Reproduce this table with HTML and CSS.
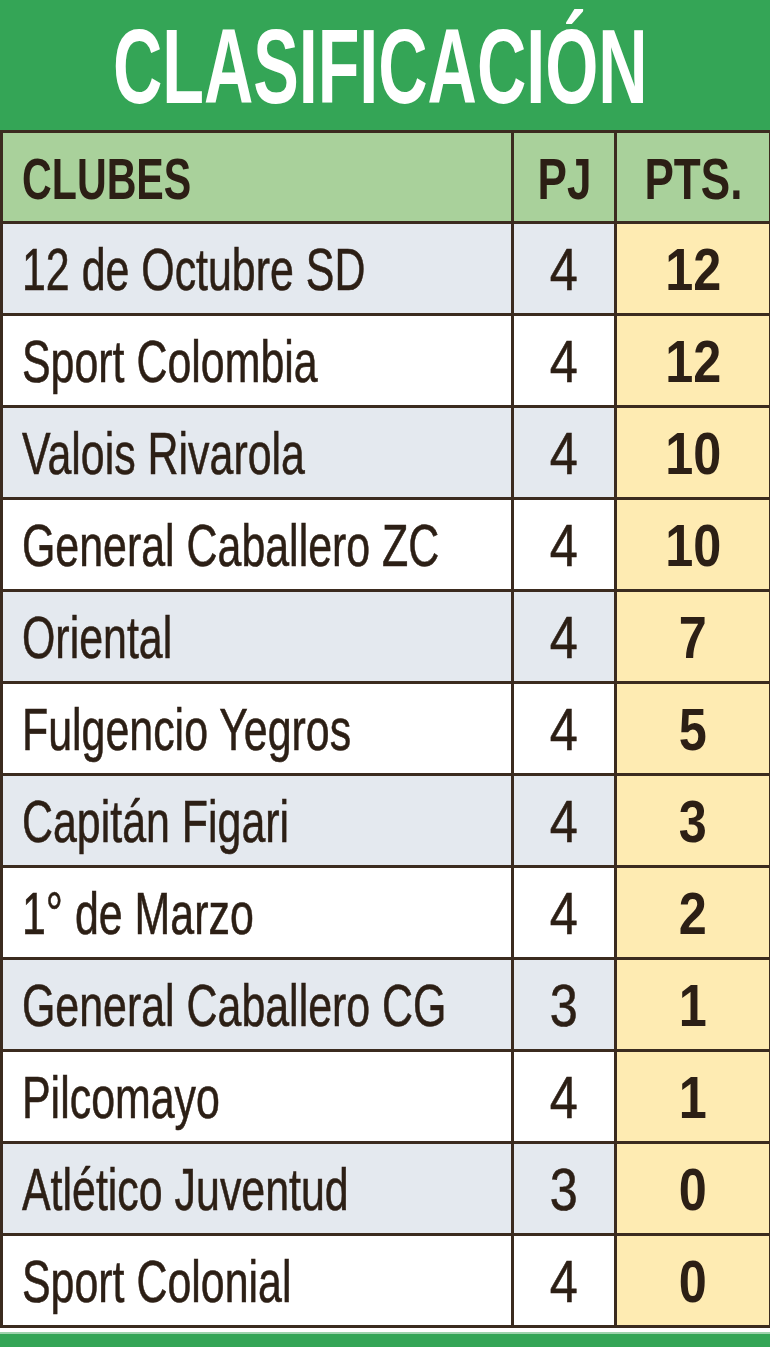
FILE: index.html
```html
<!DOCTYPE html>
<html lang="es">
<head>
<meta charset="utf-8">
<title>Clasificación</title>
<link rel="stylesheet" href="styles.css">
</head>
<body>
<div class="page">
  <header class="title-band"><h1 class="title"><span class="sq-title">CLASIFICACIÓN</span></h1></header>
  <table class="standings">
    <colgroup><col class="c-club"><col class="c-pj"><col class="c-pts"></colgroup>
    <thead>
      <tr>
        <th class="club"><span class="sq-head-l">CLUBES</span></th>
        <th class="num"><span class="sq-head">PJ</span></th>
        <th class="num"><span class="sq-head">PTS.</span></th>
      </tr>
    </thead>
    <tbody>
      <tr class="odd"><td class="club"><span class="sq">12 de Octubre SD</span></td><td class="num"><span class="sqn">4</span></td><td class="pts"><span class="sqn">12</span></td></tr>
      <tr><td class="club"><span class="sq">Sport Colombia</span></td><td class="num"><span class="sqn">4</span></td><td class="pts"><span class="sqn">12</span></td></tr>
      <tr class="odd"><td class="club"><span class="sq">Valois Rivarola</span></td><td class="num"><span class="sqn">4</span></td><td class="pts"><span class="sqn">10</span></td></tr>
      <tr><td class="club"><span class="sq">General Caballero ZC</span></td><td class="num"><span class="sqn">4</span></td><td class="pts"><span class="sqn">10</span></td></tr>
      <tr class="odd"><td class="club"><span class="sq">Oriental</span></td><td class="num"><span class="sqn">4</span></td><td class="pts"><span class="sqn">7</span></td></tr>
      <tr><td class="club"><span class="sq">Fulgencio Yegros</span></td><td class="num"><span class="sqn">4</span></td><td class="pts"><span class="sqn">5</span></td></tr>
      <tr class="odd"><td class="club"><span class="sq">Capitán Figari</span></td><td class="num"><span class="sqn">4</span></td><td class="pts"><span class="sqn">3</span></td></tr>
      <tr><td class="club"><span class="sq">1° de Marzo</span></td><td class="num"><span class="sqn">4</span></td><td class="pts"><span class="sqn">2</span></td></tr>
      <tr class="odd"><td class="club"><span class="sq">General Caballero CG</span></td><td class="num"><span class="sqn">3</span></td><td class="pts"><span class="sqn">1</span></td></tr>
      <tr><td class="club"><span class="sq">Pilcomayo</span></td><td class="num"><span class="sqn">4</span></td><td class="pts"><span class="sqn">1</span></td></tr>
      <tr class="odd"><td class="club"><span class="sq">Atlético Juventud</span></td><td class="num"><span class="sqn">3</span></td><td class="pts"><span class="sqn">0</span></td></tr>
      <tr><td class="club"><span class="sq">Sport Colonial</span></td><td class="num"><span class="sqn">4</span></td><td class="pts"><span class="sqn">0</span></td></tr>
    </tbody>
  </table>
  <div class="bottom-band"></div>
</div>
</body>
</html>
```

FILE: styles.css
```css
html, body {
  margin: 0;
  padding: 0;
  background: #ffffff;
}

.page {
  width: 770px;
  font-family: "Liberation Sans", Arial, sans-serif;
  color: #2c1f15;
}

.title-band {
  height: 130px;
  background: #34a556;
  display: flex;
  align-items: center;
  justify-content: center;
}

.title {
  margin: 0;
  font-size: 105px;
  font-weight: 700;
  line-height: 1;
  color: #ffffff;
  padding-top: 2px;
  padding-right: 10px;
}

.sq-title {
  display: inline-block;
  transform: scaleX(0.65);
  transform-origin: center;
  white-space: nowrap;
}

.standings {
  width: 769px;
  border-collapse: collapse;
  table-layout: fixed;
  border: 3px solid #3b2b1f;
}

.c-club { width: 511px; }
.c-pj { width: 103px; }
.c-pts { width: 155px; }

.standings th,
.standings td {
  border: 3px solid #3b2b1f;
  padding: 0;
  white-space: nowrap;
  overflow: visible;
}

.standings thead th {
  height: 84px;
  background: #a9d19b;
  font-size: 58px;
  font-weight: 700;
  line-height: 1;
  padding-top: 4px;
}

.standings tbody td {
  height: 87px;
  font-size: 60px;
  line-height: 1;
  background: #ffffff;
  padding-top: 2px;
}

.standings tbody td.club,
.standings tbody td.num {
  -webkit-text-stroke: 0.6px #2c1f15;
}

.standings tbody tr.odd td {
  background: #e4e9ef;
}

.standings tbody td.pts,
.standings tbody tr.odd td.pts {
  background: #feebb2;
  font-weight: 700;
}

.club {
  text-align: left;
  padding-left: 19px !important;
}

.num,
.pts {
  text-align: center;
}

.sq {
  display: inline-block;
  transform: scaleX(0.715);
  transform-origin: left center;
}

.sqn {
  display: inline-block;
  transform: scaleX(0.84);
  transform-origin: center;
}

.sq-head-l {
  display: inline-block;
  transform: scaleX(0.71);
  transform-origin: left center;
}

.sq-head {
  display: inline-block;
  transform: scaleX(0.76);
  transform-origin: center;
}

.bottom-band {
  margin-top: 4px;
  height: 17px;
  background: #34a556;
  border-top: 2px solid #9fd3ad;
}
```
